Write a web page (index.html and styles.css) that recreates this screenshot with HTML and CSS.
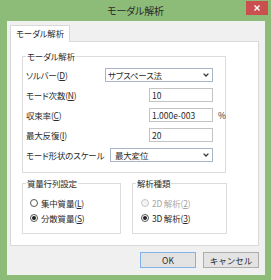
FILE: index.html
```html
<!DOCTYPE html>
<html lang="ja">
<head>
  <meta charset="UTF-8" />
  <meta name="viewport" content="width=device-width, initial-scale=1.0"/>
  <title>モーダル解析</title>
  <link rel="stylesheet" href="styles.css">
</head>
<body>
  <div class="window">
    <div class="titlebar">
      <span></span>
      <span class="title">モーダル解析</span>
      <span class="close">
        <svg width="6" height="6" viewBox="0 0 6 6"><path d="M0.5 0.5 L5.5 5.5 M5.5 0.5 L0.5 5.5" stroke="#fff" stroke-width="1.4"/></svg>
      </span>
    </div>

    <div class="client">
      <div class="tabs">
        <div class="tab active">モーダル解析</div>
      </div>

      <div class="tab-panel">
        <fieldset class="group main-group">
          <legend>モーダル解析</legend>

          <div class="row">
            <label>ソルバー(<u>D</u>)</label>
            <div class="combo combo-solver">
              <span>サブスペース法</span>
              <svg width="6" height="4" viewBox="0 0 6 4"><polyline points="0.6,0.6 3,3 5.4,0.6" fill="none" stroke="#333" stroke-width="1.3"/></svg>
            </div>
            <span class="unit"></span>
          </div>

          <div class="row">
            <label>モード次数(<u>N</u>)</label>
            <input type="text" class="field" value="10">
            <span class="unit"></span>
          </div>

          <div class="row">
            <label>収束率(<u>C</u>)</label>
            <input type="text" class="field" value="1.000e-003">
            <span class="unit">%</span>
          </div>

          <div class="row">
            <label>最大反復(<u>I</u>)</label>
            <input type="text" class="field" value="20">
            <span class="unit"></span>
          </div>

          <div class="row">
            <label>モード形状のスケール</label>
            <div class="combo combo-scale">
              <span>最大変位</span>
              <svg width="6" height="4" viewBox="0 0 6 4"><polyline points="0.6,0.6 3,3 5.4,0.6" fill="none" stroke="#333" stroke-width="1.3"/></svg>
            </div>
            <span class="unit"></span>
          </div>
        </fieldset>

        <div class="group-row">
          <fieldset class="group mass-group">
            <legend>質量行列設定</legend>
            <div class="radio-list">
              <div class="radio"><span class="dot"></span>集中質量(<u>L</u>)</div>
              <div class="radio checked"><span class="dot"></span>分散質量(<u>S</u>)</div>
            </div>
          </fieldset>

          <fieldset class="group type-group">
            <legend>解析種類</legend>
            <div class="radio-list">
              <div class="radio disabled"><span class="dot"></span>2D 解析(<u>2</u>)</div>
              <div class="radio checked"><span class="dot"></span>3D 解析(<u>3</u>)</div>
            </div>
          </fieldset>
        </div>
      </div>

      <div class="buttons">
        <button class="default">OK</button>
        <button>キャンセル</button>
      </div>
    </div>
  </div>
</body>
</html>
```

FILE: styles.css
```css
body {
  margin: 0;
  font-family: "Noto Sans CJK JP", sans-serif;
  font-size: 8.5px;
  font-feature-settings: "palt";
  letter-spacing: -0.2px;
  white-space: nowrap;
  color: #2a2a2a;
  background: #8dbb78;
}

.window {
  width: 271px;
  height: 280px;
  display: flex;
  flex-direction: column;
  background: #8dbb78;
}

.titlebar {
  height: 21px;
  display: grid;
  grid-template-columns: 1fr auto 1fr;
  align-items: start;
}

.title {
  font-size: 10px;
  line-height: 21px;
  color: #2b2b2b;
}

.close {
  justify-self: end;
  margin: 1px 3px 0 0;
  width: 22px;
  height: 14px;
  background: #c9504f;
  display: flex;
  align-items: center;
  justify-content: center;
}

.client {
  flex: 1;
  margin: 0 6px 5px 7px;
  padding: 4px 6px 7px 3px;
  background: #f0f0f0;
  display: flex;
  flex-direction: column;
}

.tabs {
  display: flex;
  height: 16px;
}

.tab {
  height: 17px;
  box-sizing: border-box;
  padding: 0 5px;
  line-height: 15px;
  border: 1px solid #d9d9d9;
  border-bottom: none;
  background: #fff;
  position: relative;
  z-index: 1;
}

.tab-panel {
  flex: 1;
  border: 1px solid #d9d9d9;
  background: #fff;
  padding: 9px 0 0 11px;
}

.group {
  margin: 0;
  min-width: 0;
  box-sizing: border-box;
  border: 1px solid #dcdcdc;
  padding: 6px 0 10px 3px;
}

.group legend {
  padding: 0 1px;
  line-height: 11px;
}

.main-group {
  width: 204px;
}

.row {
  display: flex;
  align-items: center;
  height: 14px;
}

.row + .row {
  margin-top: 6px;
}

.row label {
  flex: 1;
}

.combo {
  box-sizing: border-box;
  height: 14px;
  border: 1px solid #a9b6c9;
  background: #fff;
  display: flex;
  align-items: center;
  justify-content: space-between;
  padding: 0 3px 0 2px;
}

.combo-solver {
  width: 108px;
}

.combo-scale {
  width: 103px;
  padding-left: 4px;
}

.field {
  box-sizing: border-box;
  width: 64px;
  height: 14px;
  margin: 0;
  padding: 0 0 0 2px;
  border: 1px solid #c3c3c3;
  font-family: inherit;
  font-size: 8.5px;
  color: #2a2a2a;
  outline: none;
}

.unit {
  width: 12px;
  box-sizing: border-box;
  padding-left: 5px;
}

.group-row {
  display: flex;
  margin-top: 5px;
}

.mass-group {
  width: 99px;
  padding: 6px 0 8px 3px;
}

.type-group {
  width: 95px;
  margin-left: 11px;
  padding: 6px 0 8px 3px;
}

.mass-group .radio-list {
  margin-left: 4px;
}

.type-group .radio-list {
  margin-left: 5px;
}

.radio {
  height: 15px;
  display: flex;
  align-items: center;
}

.radio .dot {
  box-sizing: border-box;
  width: 8px;
  height: 8px;
  margin-right: 3px;
  border: 1px solid #555;
  border-radius: 50%;
  background: #fff;
  display: flex;
  align-items: center;
  justify-content: center;
}

.radio.checked .dot::after {
  content: "";
  width: 4px;
  height: 4px;
  border-radius: 50%;
  background: #222;
}

.radio.disabled {
  color: #a8a8a8;
}

.radio.disabled .dot {
  border-color: #c6c6c6;
  background: #f4f4f4;
}

.buttons {
  display: flex;
  justify-content: flex-end;
  gap: 7px;
  margin-top: 6px;
}

button {
  width: 56px;
  height: 16px;
  padding: 0;
  border: 1px solid #adadad;
  background: #e3e3e3;
  font-family: inherit;
  font-size: 8.5px;
  color: #2a2a2a;
}

button.default {
  border-color: #7eb4ea;
}
```
